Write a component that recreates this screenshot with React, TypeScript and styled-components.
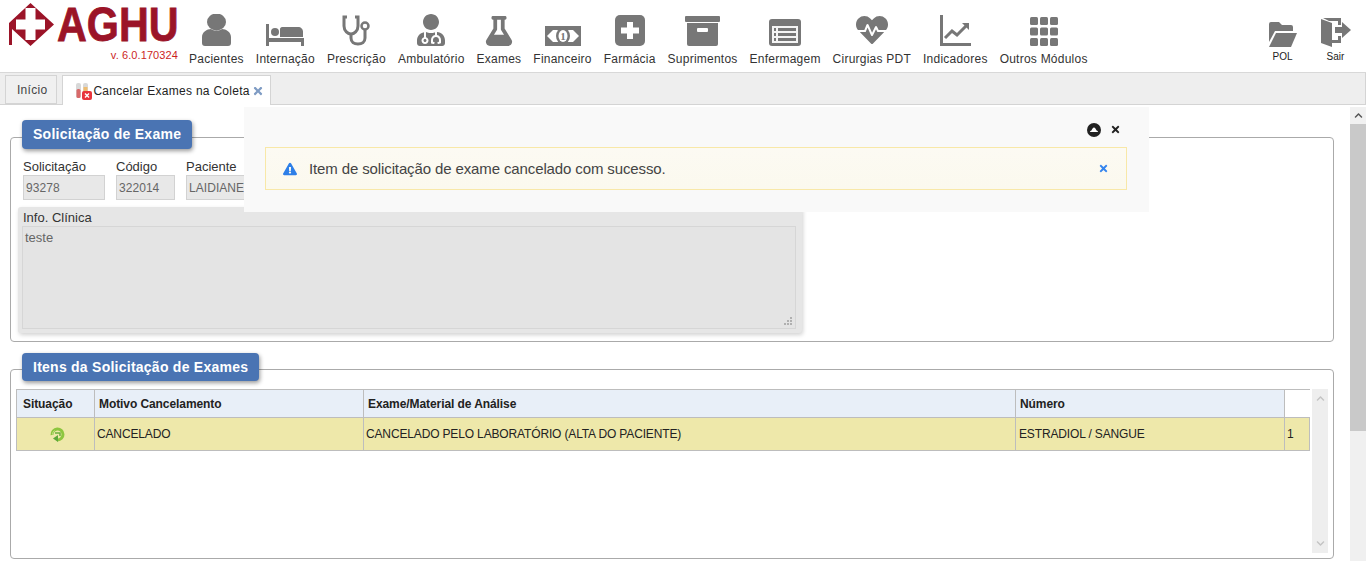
import { createGlobalStyle, styled } from 'styled-components'
import type { ReactNode } from 'react'
import {
  FaChevronDown,
  FaChevronUp,
  FaExclamationTriangle,
  FaFlask,
  FaHeartbeat,
  FaTimes,
  FaUserMd,
} from 'react-icons/fa'

const GlobalStyle = createGlobalStyle`
  html, body {
    margin: 0;
    height: 561px;
    overflow: hidden;
    background: #fff;
    font-family: 'Liberation Sans', Arial, sans-serif;
    color: #333;
  }
`

const Page = styled.div`
  position: relative;
  width: 1366px;
  height: 561px;
  overflow: hidden;
`

const Header = styled.header`
  display: flex;
  height: 72px;
  border-bottom: 1px solid #d8d8d8;
`

const Logo = styled.div`
  width: 183px;
  flex: none;
`

const LogoTop = styled.div`
  display: flex;
  height: 46px;
  padding: 3px 0 0 8px;
`

const LogoMark = styled.svg`
  flex: none;
`

const LogoWord = styled.span`
  flex: none;
  width: 142px;
  margin: 0 -20px 0 3px;
  font-size: 48px;
  line-height: 43px;
  font-weight: 700;
  color: #9b1428;
  -webkit-text-stroke: 0.8px #9b1428;
  white-space: nowrap;
  transform: scaleX(0.86);
  transform-origin: 0 0;
`

const Version = styled.div`
  padding-right: 5px;
  text-align: right;
  font-size: 11px;
  line-height: 12px;
  letter-spacing: 0.1px;
  color: #cc1f1f;
`

const Menu = styled.nav`
  display: flex;
  flex: 1;
`

const MenuItem = styled.div`
  flex: none;
  padding: 0 6px;
  display: flex;
  flex-direction: column;
  align-items: center;
  font-size: 12px;
  letter-spacing: 0.235px;
  color: #333;
  white-space: nowrap;
`

const IconSlot = styled.div`
  height: 52px;
  display: flex;
  align-items: flex-end;
  justify-content: center;
  padding-bottom: 6px;
  box-sizing: border-box;
  color: #777;
`

const Side = styled.div`
  display: flex;
  padding-right: 4px;
`

const SideItem = styled.div`
  width: 53px;
  display: flex;
  flex-direction: column;
  align-items: center;
  font-size: 10px;
  line-height: 12px;
  color: #222;
`

const SideIcon = styled(IconSlot)`
  height: 51px;
  padding-bottom: 4px;
`

const TabBar = styled.div`
  display: flex;
  gap: 5px;
  height: 31px;
  padding-left: 5px;
  background: #eee;
  border-bottom: 1px solid #d4d4d4;
  border-right: 1px solid #d4d4d4;
`

const Tab = styled.div<{ $active?: boolean }>`
  box-sizing: border-box;
  margin-top: 2px;
  height: ${(p) => (p.$active ? '30px' : '29px')};
  display: flex;
  align-items: center;
  font-size: 12px;
  letter-spacing: 0.28px;
  border: 1px solid #d4d4d4;
  border-bottom: ${(p) => (p.$active ? 'none' : '1px solid #d4d4d4')};
  background: ${(p) => (p.$active ? '#fff' : '#f0f0f0')};
  color: ${(p) => (p.$active ? '#222' : '#444')};
  padding: ${(p) => (p.$active ? '0 6px 0 12px' : '0 9px 0 11px')};
`

const TabClose = styled.span`
  display: flex;
  margin-left: 2px;
  color: #7f9cc4;
`

const Body = styled.div`
  display: flex;
  height: 456px;
`

const Main = styled.main`
  box-sizing: border-box;
  width: 1350px;
  flex: none;
  padding: 15px 16px 0 10px;
  display: flex;
  flex-direction: column;
  gap: 10px;
`

const Panel = styled.section<{ $height: number }>`
  position: relative;
  box-sizing: border-box;
  height: ${(p) => p.$height}px;
  margin-top: 17px;
  border: 1px solid #aaa;
  border-radius: 4px;
`

const Legend = styled.h2<{ $top: number; $height: number }>`
  position: absolute;
  left: 11px;
  top: ${(p) => p.$top}px;
  margin: 0;
  box-sizing: border-box;
  height: ${(p) => p.$height}px;
  padding: 0 11px 1px 11px;
  display: flex;
  align-items: center;
  font-size: 14px;
  font-weight: 700;
  letter-spacing: 0.25px;
  color: #fff;
  background: #4a74b3;
  border-radius: 4px;
  box-shadow: 1px 2px 4px rgba(0, 0, 0, 0.4);
`

const FieldRow = styled.div`
  display: flex;
  gap: 11px;
  padding: 21px 0 0 12px;
`

const Field = styled.div<{ $width: number }>`
  width: ${(p) => p.$width}px;
  font-size: 13px;
  line-height: 16px;
  color: #333;
`

const FieldValue = styled.div`
  box-sizing: border-box;
  height: 25px;
  padding-left: 2px;
  display: flex;
  align-items: center;
  background: #e8e8e8;
  border: 1px solid #d2d2d2;
  font-size: 12px;
  letter-spacing: 0.05px;
  color: #666;
  white-space: nowrap;
  overflow: hidden;
`

const ClinicalInfo = styled.div`
  box-sizing: border-box;
  width: 784px;
  height: 126px;
  margin: 7px 0 0 7px;
  padding: 3px 6px 4px 4px;
  background: #e6e6e6;
  border-radius: 3px;
  box-shadow: 1px 2px 4px rgba(0, 0, 0, 0.18);
`

const ClinicalLabel = styled.div`
  margin-left: 1px;
  font-size: 13px;
  line-height: 16px;
  color: #333;
`

const ClinicalText = styled.div`
  position: relative;
  box-sizing: border-box;
  height: 103px;
  padding: 3px 2px;
  background: #e4e4e4;
  border: 1px solid #d6d6d6;
  font-size: 13px;
  line-height: 15px;
  color: #666;
`

const Grip = styled.svg`
  position: absolute;
  right: 2px;
  bottom: 2px;
`

const TableWrap = styled.div`
  display: flex;
  padding: 19px 5px 0 5px;
  height: 168px;
`

const Grid = styled.table`
  width: 1293px;
  flex: none;
  height: 62px;
  border-collapse: collapse;
  table-layout: fixed;
  font-size: 12px;
`

const HeadCell = styled.th<{ $pad?: number }>`
  height: 27px;
  padding: 0 0 0 ${(p) => p.$pad ?? 4}px;
  text-align: left;
  font-weight: 700;
  letter-spacing: -0.08px;
  color: #222;
  background: #e8eff8;
  border: 1px solid #bdbdbd;
`

const EmptyHead = styled.th`
  border-top: 1px solid #bdbdbd;
  background: #fff;
`

const Cell = styled.td<{ $pad?: number }>`
  height: 32px;
  padding: 0 0 0 ${(p) => p.$pad ?? 2}px;
  background: #eee8aa;
  border: 1px solid #bdbdbd;
  letter-spacing: -0.15px;
  color: #222;
`

const RowIcon = styled.svg`
  display: block;
  margin: 0 auto;
`

const MiniScroll = styled.div`
  width: 16px;
  flex: none;
  height: 164px;
  margin-left: 2px;
  background: #eee;
  display: flex;
  flex-direction: column;
  align-items: center;
  justify-content: space-between;
  padding: 5px 0;
  box-sizing: border-box;
  color: #c4c4c4;
`

const PageScroll = styled.div`
  width: 16px;
  flex: none;
  margin-top: 2px;
  background: #f0f0f0;
  display: flex;
  flex-direction: column;
`

const ScrollButton = styled.div`
  height: 17px;
  display: flex;
  align-items: center;
  justify-content: center;
  background: #f1f1f1;
  color: #555;
`

const ScrollThumb = styled.div`
  height: 307px;
  background: #c9c9c9;
`

const MessagePanel = styled.div`
  position: absolute;
  left: 244px;
  top: 107px;
  width: 905px;
  height: 105px;
  box-sizing: border-box;
  background: #f9f9f9;
  padding: 15px 22px 0 21px;
`

const MessageTools = styled.div`
  display: flex;
  justify-content: flex-end;
  align-items: center;
  gap: 9px;
  height: 15px;
  padding-right: 6px;
  color: #222;
`

const Message = styled.div`
  box-sizing: border-box;
  height: 43px;
  margin-top: 10px;
  display: flex;
  align-items: center;
  padding: 0 17px;
  font-size: 15px;
  letter-spacing: -0.12px;
  color: #444;
  border: 1px solid #f8e8a8;
  background: linear-gradient(#fcfaf3, #fbf9ee);
`

const MessageIcon = styled.span`
  display: flex;
  width: 26px;
  color: #2d7fe8;
`

const MessageText = styled.span`
  flex: 1;
`

const MessageClose = styled.span`
  display: flex;
  color: #3585ee;
`

function TabIcon() {
  return (
    <svg width="18" height="18" viewBox="0 0 18 18">
      <rect x="1" y="1" width="5" height="15" rx="2" fill="#d8d8d8" />
      <rect x="1.5" y="7" width="4" height="9" rx="1.5" fill="#d86a6a" />
      <rect x="8" y="1" width="5" height="12" rx="2" fill="#d8d8d8" />
      <rect x="8.5" y="5" width="4" height="5" fill="#eebc70" />
      <rect x="7" y="9" width="10" height="9" rx="2" fill="#e8343c" />
      <path d="M10 11.5l4 4M14 11.5l-4 4" stroke="#fff" strokeWidth="1.4" />
    </svg>
  )
}

function UserIcon() {
  return (
    <svg width="29" height="32" viewBox="0 0 29 32" fill="currentColor">
      <ellipse cx="14.5" cy="8" rx="9.5" ry="8.5" />
      <path d="M0 29v-6c0-5 5-8 9-8 3 2 8 2 11 0 4 0 9 3 9 8v6a3 3 0 0 1-3 3H3a3 3 0 0 1-3-3z" />
    </svg>
  )
}

function BedIcon() {
  return (
    <svg width="38" height="22" viewBox="0 0 38 22" fill="currentColor">
      <rect x="0" y="0" width="3" height="22" />
      <rect x="0" y="14" width="38" height="4" />
      <rect x="35" y="14" width="3" height="8" />
      <circle cx="9" cy="8" r="4" />
      <path d="M14 13V5c0-1 1-2 2-2h16c3 0 5 2 5 5v5z" />
    </svg>
  )
}

function StethoscopeIcon() {
  return (
    <svg width="30" height="31" viewBox="0 0 30 31" fill="none" stroke="currentColor" strokeWidth="3">
      <path d="M6 2H3v9c0 5 4 8 7 8s7-3 7-8V2h-3" />
      <path d="M10 19v4c0 4 3 6 7 6s7-2 7-6v-8" />
      <circle cx="24" cy="11" r="3.5" strokeWidth="2.5" />
    </svg>
  )
}

function MoneyIcon() {
  return (
    <svg width="36" height="20" viewBox="0 0 36 20" fill="currentColor">
      <rect width="36" height="20" />
      <path d="M2 10l6-6h20l6 6-6 6H8z" fill="#fff" />
      <ellipse cx="18" cy="10" rx="7" ry="8" />
      <ellipse cx="18" cy="10" rx="4.5" ry="6" fill="#fff" />
      <text x="18" y="14" fontSize="11" fontWeight="700" textAnchor="middle" fontFamily="Liberation Serif, serif">
        1
      </text>
    </svg>
  )
}

function PlusBoxIcon() {
  return (
    <svg width="30" height="31" viewBox="0 0 30 31" fill="currentColor">
      <rect width="30" height="31" rx="5" />
      <path d="M12 7h6v5.500h6v6h-6V24h-6v-5.500H6v-6h6z" fill="#fff" />
    </svg>
  )
}

function ArchiveIcon() {
  return (
    <svg width="35" height="30" viewBox="0 0 35 30" fill="currentColor">
      <rect width="35" height="6" rx="1" />
      <path d="M2 7h31v21a2 2 0 0 1-2 2H4a2 2 0 0 1-2-2z" />
      <rect x="12" y="12" width="11" height="4" rx="1" fill="#fff" />
    </svg>
  )
}

function RecordIcon() {
  return (
    <svg width="32" height="27" viewBox="0 0 32 27" fill="currentColor">
      <rect width="32" height="27" rx="3" />
      <rect x="3" y="7" width="26" height="17" fill="#f4f4f4" />
      <rect x="5" y="9" width="2" height="3" />
      <rect x="9" y="9" width="18" height="3" />
      <rect x="5" y="14" width="2" height="3" />
      <rect x="9" y="14" width="18" height="3" />
      <rect x="5" y="19" width="2" height="3" />
      <rect x="9" y="19" width="18" height="3" />
    </svg>
  )
}

function ChartIcon() {
  return (
    <svg width="31" height="31" viewBox="0 0 31 31" fill="none" stroke="currentColor">
      <path d="M1.5 0v29.5H31" strokeWidth="3" />
      <path d="M5 23l7-7 5 4 9-9" strokeWidth="3" />
      <path d="M22 8h7v7z" fill="currentColor" stroke="none" />
    </svg>
  )
}

function GridIcon() {
  const cells = [0, 1, 2]
  return (
    <svg width="28" height="29" viewBox="0 0 28 29" fill="currentColor">
      {cells.map((row) =>
        cells.map((col) => (
          <rect key={`${row}-${col}`} x={col * 10} y={row * 10.5} width="8" height="8" rx="1.5" />
        )),
      )}
    </svg>
  )
}

function FolderIcon() {
  return (
    <svg width="28" height="26" viewBox="0 0 28 26" fill="currentColor">
      <path d="M0 3a2 2 0 0 1 2-2h8l3 3h9a2 2 0 0 1 2 2v4H6L0 21z" />
      <path d="M7 12h21l-6 14H0z" />
    </svg>
  )
}

function DoorIcon() {
  return (
    <svg width="30" height="29" viewBox="0 0 30 29" fill="currentColor">
      <path d="M0 1l11 4v24L0 25z" />
      <path d="M2 0h18v7h-3V3H8z" />
      <path d="M11 22h6v-4h3v7h-9z" />
      <path d="M14 9h7V4l9 8-9 8v-5h-7z" />
    </svg>
  )
}

function CollapseIcon() {
  return (
    <svg width="14" height="14" viewBox="0 0 14 14">
      <circle cx="7" cy="7" r="7" fill="#222" />
      <path d="M3 9c0-1 1-1.500 1.500-1.500C5 6 6 4.500 7 4.500s2 1.500 2.500 3C10 7.500 11 8 11 9z" fill="#fff" />
    </svg>
  )
}

function RedoIcon() {
  return (
    <RowIcon width="16" height="16" viewBox="0 0 16 16" fill="none">
      <path d="M3 9a5.500 5.500 0 1 1 5.500 5" stroke="#8dc63f" strokeWidth="3" />
      <path d="M3.500 8.500a5 5 0 0 1 2-4" stroke="#c5e08a" strokeWidth="1" />
      <path d="M9 9v7l-5-3.500z" fill="#5da839" />
      <path d="M6 7h5v3" stroke="#6cae3e" strokeWidth="1.500" />
    </RowIcon>
  )
}

const modules: { label: string; icon: ReactNode }[] = [
  { label: 'Pacientes', icon: <UserIcon /> },
  { label: 'Internação', icon: <BedIcon /> },
  { label: 'Prescrição', icon: <StethoscopeIcon /> },
  { label: 'Ambulatório', icon: <FaUserMd size={32} /> },
  { label: 'Exames', icon: <FaFlask size={30} /> },
  { label: 'Financeiro', icon: <MoneyIcon /> },
  { label: 'Farmácia', icon: <PlusBoxIcon /> },
  { label: 'Suprimentos', icon: <ArchiveIcon /> },
  { label: 'Enfermagem', icon: <RecordIcon /> },
  { label: 'Cirurgias PDT', icon: <FaHeartbeat size={32} /> },
  { label: 'Indicadores', icon: <ChartIcon /> },
  { label: 'Outros Módulos', icon: <GridIcon /> },
]

export default function App() {
  return (
    <Page>
      <GlobalStyle />
      <Header>
        <Logo>
          <LogoTop>
            <LogoMark width="46" height="44" viewBox="0 0 46 44">
              <path d="M22.500 0 46 21.500 22.500 43 4 26v16H1V20z" fill="#9b1428" />
              <path d="M17.500 5h10v11.500H37v10h-9.500V37h-10V26.500H8v-10h9.500z" fill="#fff" />
            </LogoMark>
            <LogoWord>AGHU</LogoWord>
          </LogoTop>
          <Version>v. 6.0.170324</Version>
        </Logo>
        <Menu>
          {modules.map((m) => (
            <MenuItem key={m.label}>
              <IconSlot>{m.icon}</IconSlot>
              {m.label}
            </MenuItem>
          ))}
        </Menu>
        <Side>
          <SideItem>
            <SideIcon>
              <FolderIcon />
            </SideIcon>
            POL
          </SideItem>
          <SideItem>
            <SideIcon>
              <DoorIcon />
            </SideIcon>
            Sair
          </SideItem>
        </Side>
      </Header>

      <TabBar>
        <Tab>Início</Tab>
        <Tab $active>
          <TabIcon />
          Cancelar Exames na Coleta
          <TabClose>
            <FaTimes size={12} />
          </TabClose>
        </Tab>
      </TabBar>

      <Body>
        <Main>
          <Panel $height={205}>
            <Legend $top={-18} $height={29}>
              Solicitação de Exame
            </Legend>
            <FieldRow>
              <Field $width={82}>
                Solicitação
                <FieldValue>93278</FieldValue>
              </Field>
              <Field $width={59}>
                Código
                <FieldValue>322014</FieldValue>
              </Field>
              <Field $width={200}>
                Paciente
                <FieldValue>LAIDIANE</FieldValue>
              </Field>
            </FieldRow>
            <ClinicalInfo>
              <ClinicalLabel>Info. Clínica</ClinicalLabel>
              <ClinicalText>
                teste
                <Grip width="10" height="10" viewBox="0 0 10 10" fill="#b0b0b0">
                  <rect x="7" y="1" width="2" height="2" />
                  <rect x="4" y="4" width="2" height="2" />
                  <rect x="7" y="4" width="2" height="2" />
                  <rect x="1" y="7" width="2" height="2" />
                  <rect x="4" y="7" width="2" height="2" />
                  <rect x="7" y="7" width="2" height="2" />
                </Grip>
              </ClinicalText>
            </ClinicalInfo>
          </Panel>
          <Panel $height={190}>
            <Legend $top={-17} $height={28}>
              Itens da Solicitação de Exames
            </Legend>
            <TableWrap>
              <Grid>
                <colgroup>
                  <col width={78} />
                  <col width={269} />
                  <col width={652} />
                  <col width={269} />
                  <col width={25} />
                </colgroup>
                <thead>
                  <tr>
                    <HeadCell $pad={6}>Situação</HeadCell>
                    <HeadCell>Motivo Cancelamento</HeadCell>
                    <HeadCell>Exame/Material de Análise</HeadCell>
                    <HeadCell>Número</HeadCell>
                    <EmptyHead />
                  </tr>
                </thead>
                <tbody>
                  <tr>
                    <Cell>
                      <RedoIcon />
                    </Cell>
                    <Cell>CANCELADO</Cell>
                    <Cell>CANCELADO PELO LABORATÓRIO (ALTA DO PACIENTE)</Cell>
                    <Cell $pad={3}>ESTRADIOL / SANGUE</Cell>
                    <Cell>1</Cell>
                  </tr>
                </tbody>
              </Grid>
              <MiniScroll>
                <FaChevronUp size={9} />
                <FaChevronDown size={9} />
              </MiniScroll>
            </TableWrap>
          </Panel>
        </Main>
        <PageScroll>
          <ScrollButton>
            <FaChevronUp size={9} />
          </ScrollButton>
          <ScrollThumb />
        </PageScroll>
      </Body>

      <MessagePanel>
        <MessageTools>
          <CollapseIcon />
          <FaTimes size={11} />
        </MessageTools>
        <Message>
          <MessageIcon>
            <FaExclamationTriangle size={14} />
          </MessageIcon>
          <MessageText>Item de solicitação de exame cancelado com sucesso.</MessageText>
          <MessageClose>
            <FaTimes size={11} />
          </MessageClose>
        </Message>
      </MessagePanel>
    </Page>
  )
}
